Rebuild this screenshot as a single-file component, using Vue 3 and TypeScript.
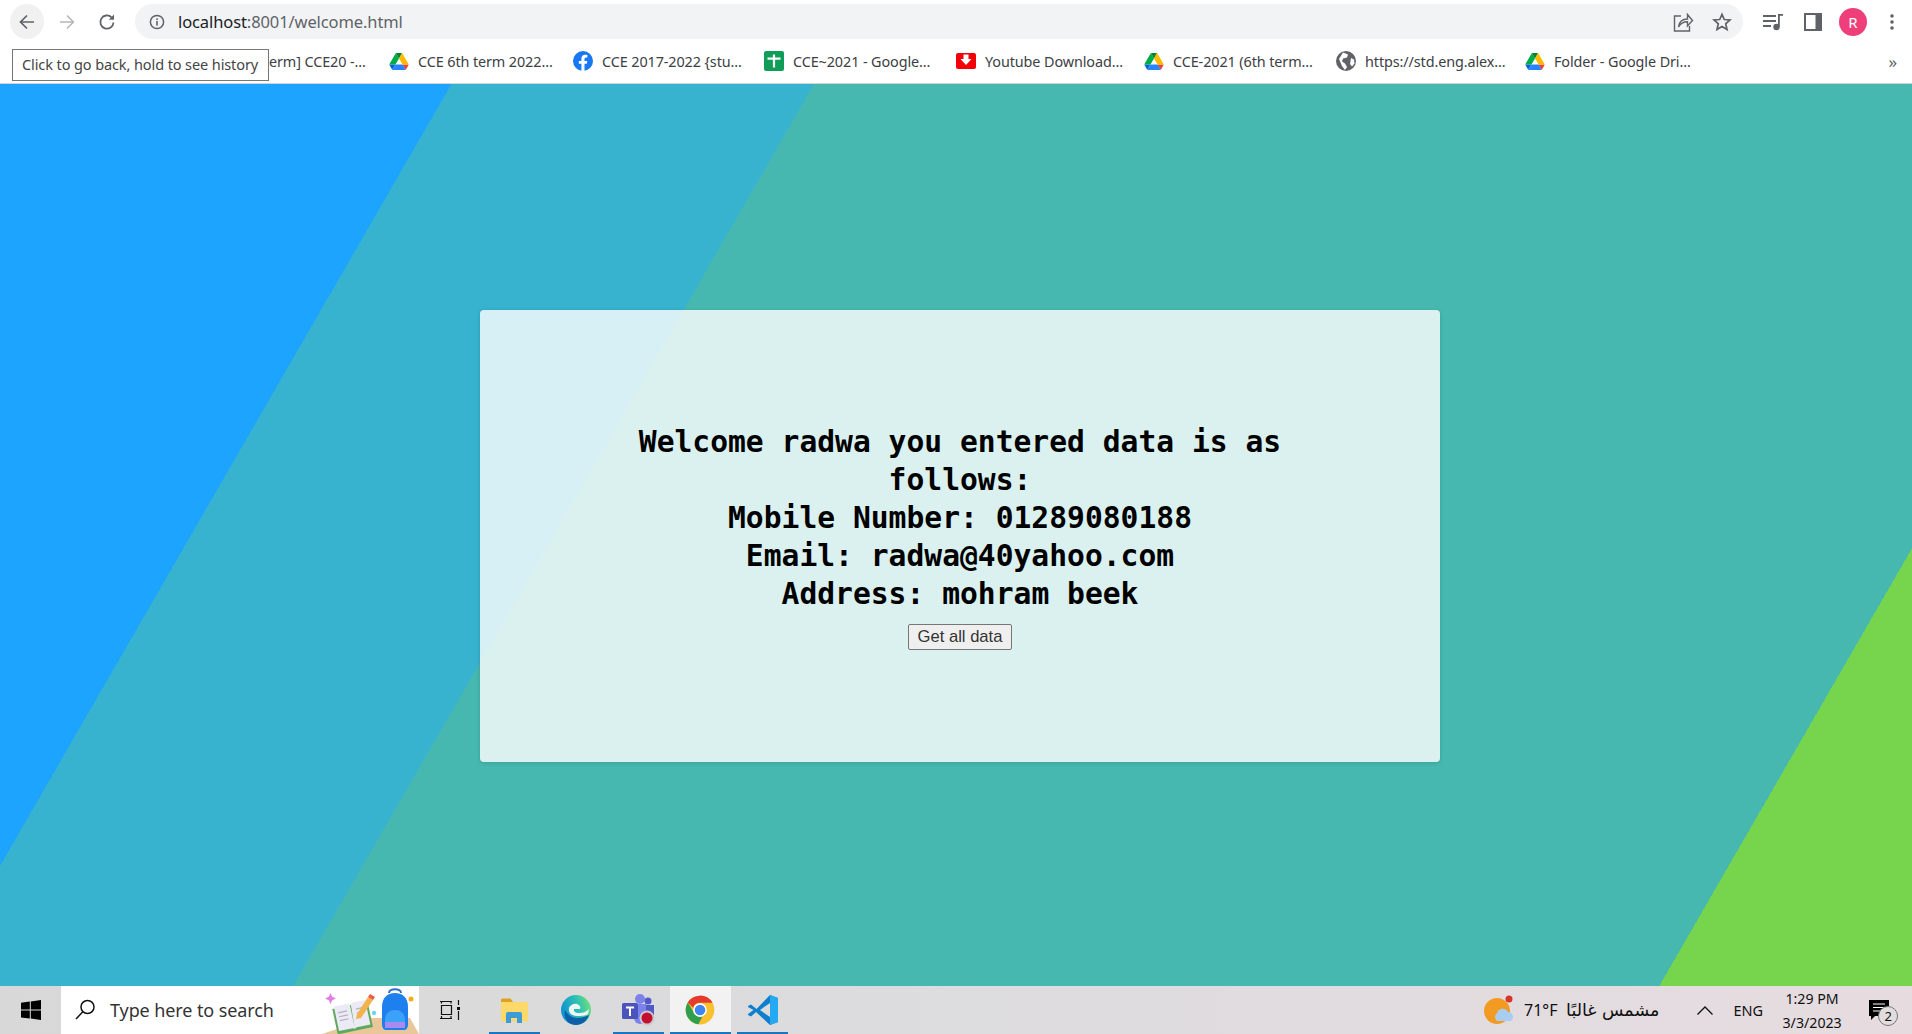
<script setup lang="ts">
// Bookmarks bar data, first one sits mostly under the tooltip
type Bookmark = { icon: string; label: string; pitch: number }

const bookmarks: Bookmark[] = [
  { icon: 'drive', label: 'CCE 6th term 2022...', pitch: 184 },
  { icon: 'facebook', label: 'CCE 2017-2022 {stu...', pitch: 191 },
  { icon: 'sheets', label: 'CCE~2021 - Google...', pitch: 192 },
  { icon: 'youtube', label: 'Youtube Download...', pitch: 188 },
  { icon: 'drive', label: 'CCE-2021 (6th term...', pitch: 192 },
  { icon: 'globe', label: 'https://std.eng.alex...', pitch: 189 },
  { icon: 'drive', label: 'Folder - Google Dri...', pitch: 170 },
]

const user = {
  name: 'radwa',
  mobile: '01289080188',
  email: 'radwa@40yahoo.com',
  address: 'mohram beek',
}
</script>

<template>
  <div class="screen">
    <header class="browser">
      <div class="toolbar">
        <div class="nav-btn nav-btn-active">
          <svg width="18" height="18" viewBox="0 0 18 18" fill="none" stroke="#5f6368" stroke-width="1.7">
            <path d="M16 9H3M9 2.500 2.500 9 9 15.500" />
          </svg>
        </div>
        <div class="nav-btn">
          <svg width="18" height="18" viewBox="0 0 18 18" fill="none" stroke="#b4b6b9" stroke-width="1.5">
            <path d="M2 9h13M9 2.500 15.500 9 9 15.500" />
          </svg>
        </div>
        <div class="nav-btn">
          <svg width="18" height="18" viewBox="0 0 18 18" fill="none" stroke="#5f6368" stroke-width="1.8">
            <path d="M15.500 9.500A6.600 6.600 0 1 1 13.600 4.400" />
            <path d="M16 1.600v5.200h-5.200z" fill="#5f6368" stroke="none" />
          </svg>
        </div>
        <div class="omnibox">
          <svg class="info-icon" width="16" height="16" viewBox="0 0 16 16" fill="none">
            <circle cx="8" cy="8" r="6.600" stroke="#5f6368" stroke-width="1.5" />
            <rect x="7.200" y="7" width="1.600" height="4.600" fill="#5f6368" />
            <rect x="7.200" y="4.400" width="1.600" height="1.600" fill="#5f6368" />
          </svg>
          <span class="url"><span class="host">localhost</span>:8001/welcome.html</span>
          <svg class="share-icon" width="22" height="22" viewBox="0 0 22 22" fill="none" stroke="#5f6368" stroke-width="1.4">
            <path d="M9 5H2.500v15h15v-5" />
            <path d="M6.500 16c.6-5 4-8 9-8V3.500l5 6-5 5.500v-4.300c-4 0-7 1.500-9 5.300z" />
          </svg>
          <svg class="star-icon" width="20" height="20" viewBox="0 0 20 20" fill="none" stroke="#5f6368" stroke-width="1.7">
            <path d="M10 2.300l2.300 5.200 5.700.5-4.300 3.800 1.300 5.600-5-3-5 3 1.300-5.600L2 8l5.700-.5z" />
          </svg>
        </div>
        <div class="toolbar-icons">
          <svg width="20" height="18" viewBox="0 0 20 18" fill="#5f6368">
            <rect x="0" y="2" width="13" height="2" />
            <rect x="0" y="7" width="13" height="2" />
            <rect x="0" y="12" width="8" height="2" />
            <rect x="16" y="1" width="4" height="1.800" />
            <rect x="15" y="1" width="1.800" height="13" />
            <circle cx="13.500" cy="14" r="3.200" />
          </svg>
          <svg class="side-panel" width="18" height="18" viewBox="0 0 18 18" fill="none">
            <rect x="1" y="1" width="16" height="16" fill="#fff" stroke="#5f6368" stroke-width="2" />
            <rect x="11.500" y="1" width="5.500" height="16" fill="#5f6368" />
          </svg>
          <div class="avatar">R</div>
          <svg class="menu-dots" width="6" height="18" viewBox="0 0 6 18" fill="#5f6368">
            <circle cx="3" cy="3" r="1.800" />
            <circle cx="3" cy="9" r="1.800" />
            <circle cx="3" cy="15" r="1.800" />
          </svg>
        </div>
      </div>
      <div class="bookmarks">
        <span class="first-bookmark">erm] CCE20 -...</span>
        <div v-for="(b, i) in bookmarks" :key="i" class="bookmark" :style="{ width: b.pitch + 'px' }">
          <svg v-if="b.icon === 'drive'" width="20" height="17" viewBox="0 0 87.300 78">
            <path d="m6.600 66.850 3.850 6.650c.8 1.400 1.950 2.500 3.300 3.300l13.750-23.800h-27.500c0 1.550.4 3.100 1.200 4.500z" fill="#0066da" />
            <path d="m43.650 25-13.750-23.800c-1.350.8-2.500 1.900-3.300 3.300l-25.400 44a9.060 9.060 0 0 0 -1.200 4.500h27.500z" fill="#00ac47" />
            <path d="m73.550 76.800c1.350-.8 2.500-1.900 3.300-3.300l1.600-2.750 7.650-13.250c.8-1.400 1.200-2.950 1.200-4.500h-27.502l5.852 11.500z" fill="#ea4335" />
            <path d="m43.650 25 13.750-23.800c-1.350-.8-2.900-1.200-4.500-1.200h-18.500c-1.600 0-3.150.45-4.500 1.200z" fill="#00832d" />
            <path d="m59.800 53h-32.300l-13.750 23.800c1.350.8 2.900 1.200 4.500 1.200h50.800c1.600 0 3.150-.45 4.500-1.200z" fill="#2684fc" />
            <path d="m73.400 26.500-12.700-22c-.8-1.400-1.950-2.500-3.300-3.300l-13.750 23.800 16.150 28h27.450c0-1.550-.4-3.100-1.200-4.500z" fill="#ffba00" />
          </svg>
          <svg v-else-if="b.icon === 'facebook'" width="20" height="20" viewBox="0 0 20 20">
            <circle cx="10" cy="10" r="10" fill="#1877f2" />
            <path d="M13.800 12.800l.5-2.900h-2.800V8c0-.8.4-1.600 1.600-1.600h1.300V4c0 0-1.100-.2-2.200-.2-2.300 0-3.800 1.400-3.800 3.900v2.200H5.800v2.900h2.600V20h3.100v-7.200z" fill="#fff" />
          </svg>
          <svg v-else-if="b.icon === 'sheets'" width="20" height="20" viewBox="0 0 20 20">
            <rect width="20" height="20" rx="2" fill="#0f9d58" />
            <rect x="3.500" y="6.500" width="13" height="2.200" fill="#fff" />
            <rect x="8.900" y="3.500" width="2.200" height="13" fill="#fff" />
          </svg>
          <svg v-else-if="b.icon === 'youtube'" width="20" height="16" viewBox="0 0 20 16">
            <rect width="20" height="16" rx="2" fill="#f40009" />
            <path d="M7.500 1.500h5v4.500h3L10 12 4.500 6h3z" fill="#fff" />
          </svg>
          <svg v-else width="20" height="20" viewBox="0 0 20 20">
            <circle cx="10" cy="10" r="10" fill="#5f6368" />
            <path d="M7 1.500l5 2-1 3-4 1-1 3 3 2 2 3.500-2 3L6 15 3 8zM15 7l3 1.500.5 4-2.500 3-2-2.500z" fill="#fff" />
          </svg>
          <span class="bookmark-label">{{ b.label }}</span>
        </div>
        <span class="more">»</span>
      </div>
      <div class="tooltip">Click to go back, hold to see history</div>
    </header>

    <main class="page">
      <section class="card">
        <div class="details">
          <div>Welcome {{ user.name }} you entered data is as follows:</div>
          <div>Mobile Number: {{ user.mobile }}</div>
          <div>Email: {{ user.email }}</div>
          <div>Address: {{ user.address }}</div>
        </div>
        <button class="get-all" type="button">Get all data</button>
      </section>
    </main>

    <footer class="taskbar">
      <div class="start">
        <svg width="20" height="20" viewBox="0 0 20 20" fill="#000">
          <path d="M0 2.800 8.800 1.600v8H0zM9.800 1.400 20 0v9.600H9.800zM0 10.600h8.800v8L0 17.400zM9.800 10.600H20V20L9.800 18.600z" />
        </svg>
      </div>
      <div class="search">
        <svg width="20" height="22" viewBox="0 0 20 22" fill="none" stroke="#111" stroke-width="1.500">
          <circle cx="12.500" cy="8" r="6.500" />
          <path d="M7.800 12.800 1 20" />
        </svg>
        <span class="search-text">Type here to search</span>
        <svg class="search-art" width="100" height="47" viewBox="0 0 100 47">
          <path d="M3 47 51 31h40l9 16z" fill="#e9c79b" />
          <path d="M11.500 6l1.600 3.800 3.900 1.700-3.900 1.700-1.600 3.800-1.600-3.800L6 11.500l3.900-1.700z" fill="#e57ae8" />
          <g transform="translate(-9 3) rotate(-12 42 25)">
            <rect x="24" y="15" width="36" height="26" fill="#5fa85c" />
            <path d="M26 13h15l1 2v24l-2-1H26zM43 15l1-2h14v25H44l-2 1z" fill="#eceaf6" />
            <path d="M29 20h9M29 24h9M29 28h9M47 20h8M47 24h8" stroke="#b4b2c2" stroke-width="1.200" />
          </g>
          <path d="M38 27 49 10l5 3-12 18-5 1z" fill="#f3b34c" />
          <path d="M49 10l2-3 5 3-2 3z" fill="#ec5a4a" />
          <circle cx="55" cy="26" r="2.200" fill="#6ed6ee" />
          <path d="M63 38V20c0-9 5-14 13-14s13 5 13 14v18c0 3-2 5-4 5H67c-2 0-4-2-4-5z" fill="#1e80ee" />
          <path d="M70 6c0-5 12-5 12 0" fill="none" stroke="#2a6fc9" stroke-width="2" />
          <path d="M66 41V33c0-6 4-10 10-10s10 4 10 10v8z" fill="#3aa2f8" />
          <path d="M66 35h20v6H66z" fill="#a98af0" />
          <circle cx="92" cy="12" r="2.500" fill="#f7ac16" />
        </svg>
      </div>
      <div class="task-item task-view">
        <svg width="20" height="20" viewBox="0 0 20 20" fill="none" stroke="#111" stroke-width="1.200">
          <path d="M0 1.500h12M0 18.500h12M1.500 5.500h10v9h-10zM1.500 1.500v2M11 1.500v2M1.500 16v2.500M11 16v2.500M18.500 0v5M18.500 11v9" />
          <rect x="17" y="7" width="3" height="3" fill="#111" stroke="none" />
        </svg>
      </div>
      <div class="task-item open explorer-item">
        <svg width="28" height="25" viewBox="0 0 28 25">
          <path d="M1 2a1.500 1.500 0 0 1 1.500-1.500h8L13 4H1z" fill="#dfa120" />
          <path d="M1 4h27v18a1.500 1.500 0 0 1-1.500 1.500H2.500A1.500 1.500 0 0 1 1 22z" fill="#fcd96a" />
          <path d="M6 16a2 2 0 0 1 2-2h12a2 2 0 0 1 2 2v9h-5v-5h-6v5H6z" fill="#3d9bd8" />
        </svg>
      </div>
      <div class="task-item edge-item">
        <svg width="30" height="30" viewBox="0 0 30 30">
          <defs>
            <linearGradient id="edgeTop" x1="0" y1="0.600" x2="1" y2="0.300">
              <stop offset="0" stop-color="#0c8fd8" />
              <stop offset="0.600" stop-color="#2fc2b0" />
              <stop offset="1" stop-color="#6fe07a" />
            </linearGradient>
          </defs>
          <circle cx="15" cy="15" r="15" fill="url(#edgeTop)" />
          <path d="M15 30C7 30 2 23 4 15c2 4 6 8 12 8 4 0 8-1 12-3-2 6-7 10-13 10z" fill="#0f5fa8" />
          <path d="M17 22c-6 0-9-4-8-8 1-3 5-5 8-4 3 1 4 3 3 5h-6c-.5 3 2 4 5 4 4 0 7-1 10-4l-1 5c-3 2-7 2-11 2z" fill="#f0f4f5" transform="translate(-1 -1)" />
        </svg>
      </div>
      <div class="task-item open teams-item">
        <svg width="33" height="32" viewBox="0 0 33 32">
          <circle cx="18" cy="5" r="5" fill="#7b83eb" />
          <circle cx="26" cy="7" r="3.500" fill="#5059c9" />
          <path d="M12 10h12v14a6 6 0 0 1-12 0z" fill="#7b83eb" />
          <path d="M24 11h8v9a4 4 0 0 1-8 0z" fill="#5059c9" />
          <rect x="0" y="9" width="16" height="16" rx="1.500" fill="#4b53bc" />
          <path d="M4 12.500h8v2H9v7.500H7v-7.500H4z" fill="#fff" />
          <circle cx="25" cy="24" r="7.500" fill="#c9c9cc" />
          <circle cx="25" cy="24" r="5.500" fill="#c50f2e" />
        </svg>
      </div>
      <div class="task-item open active chrome-item">
        <svg width="30" height="30" viewBox="0 0 48 48">
          <circle cx="24" cy="24" r="23" fill="#fbc02d" />
          <path d="M24 1a23 23 0 0 1 20 11.500H24a11.500 11.500 0 0 0-11 8L4.500 11.800A23 23 0 0 1 24 1z" fill="#e53a2e" />
          <path d="M4.500 11.800 14 28a11.500 11.500 0 0 0 13.500 7L21.500 46.800A23 23 0 0 1 4.500 11.800z" fill="#2e9e4f" />
          <circle cx="24" cy="24" r="11" fill="#fff" />
          <circle cx="24" cy="24" r="8.500" fill="#3f85f2" />
        </svg>
      </div>
      <div class="task-item open vscode-item">
        <svg width="30" height="30" viewBox="0 0 30 30">
          <path d="M22 0 8.500 14 3 9.500 0 11v1l5.500 3L0 19v1l3 1.500L8 17l14 13 8-3V3z" fill="#0d7fcb" />
          <path d="M22 0l8 3v24l-8 3z" fill="#24a9f2" />
          <path d="M22 8v14L12 15z" fill="#dcdcde" />
        </svg>
      </div>

      <div class="tray">
        <svg class="weather" width="30" height="32" viewBox="0 0 30 32">
          <circle cx="13" cy="17" r="13" fill="#f39a22" />
          <circle cx="25" cy="5" r="3.500" fill="#d7342c" />
          <path d="M13 27a5 5 0 0 1 0-8 6 6 0 0 1 11-1 5 5 0 0 1 3 9z" fill="#a9cdf0" />
        </svg>
        <span class="temp">71°F</span>
        <span class="forecast" dir="rtl">مشمس غالبًا</span>
        <svg class="chevron" width="16" height="9" viewBox="0 0 16 9" fill="none" stroke="#111" stroke-width="1.300">
          <path d="M.5 8.500 8 1l7.500 7.500" />
        </svg>
        <span class="lang">ENG</span>
        <div class="clock">
          <span>1:29 PM</span>
          <span>3/3/2023</span>
        </div>
        <div class="notify">
          <svg width="20" height="21" viewBox="0 0 20 21">
            <path d="M0 0h20v16H6l-4 4v-4H0z" fill="#000" />
            <path d="M4 4h12M4 7.500h12M4 11h9" stroke="#fff" stroke-width="1.200" />
          </svg>
          <span class="badge">2</span>
        </div>
      </div>
    </footer>
  </div>
</template>

<style>
body {
  margin: 0;
  overflow: hidden;
}
</style>

<style scoped>
.screen {
  width: 1912px;
  height: 1034px;
  display: flex;
  flex-direction: column;
  overflow: hidden;
  font-family: "Noto Sans", "Open Sans", sans-serif;
  color: #3c4043;
}

.browser {
  position: relative;
  height: 84px;
  flex: none;
  background: #fff;
  box-sizing: border-box;
  border-bottom: 1px solid #d2d3d5;
}

.toolbar {
  height: 43px;
  box-sizing: border-box;
  padding: 4px 0 0 10px;
  display: flex;
  align-items: flex-start;
}

.nav-btn {
  width: 34px;
  height: 35px;
  margin-right: 6px;
  display: flex;
  align-items: center;
  justify-content: center;
  border-radius: 50%;
}

.nav-btn-active {
  background: #f1f1f2;
}

.omnibox {
  flex: none;
  width: 1608px;
  height: 35px;
  margin-left: 5px;
  box-sizing: border-box;
  padding: 0 11px 0 14px;
  display: flex;
  align-items: center;
  background: #f1f3f4;
  border-radius: 18px;
}

.info-icon {
  margin-right: 13px;
}

.url {
  flex: 1;
  font-size: 16.500px;
  letter-spacing: -0.1px;
  color: #5f6368;
}

.host {
  color: #202124;
}

.share-icon {
  margin-right: 18px;
}

.toolbar-icons {
  display: flex;
  align-items: center;
  height: 35px;
  margin-left: 20px;
}

.toolbar-icons svg {
  margin-right: 21px;
}

.toolbar-icons .side-panel {
  margin-right: 17px;
}

.toolbar-icons .menu-dots {
  margin-right: 0;
}

.avatar {
  width: 28px;
  height: 28px;
  margin-right: 22px;
  border-radius: 50%;
  background: #ee3f7a;
  color: #fff;
  font-size: 15px;
  line-height: 28px;
  text-align: center;
}

.bookmarks {
  height: 36px;
  box-sizing: border-box;
  display: flex;
  align-items: center;
  padding: 0 15px 0 269px;
  font-size: 14.400px;
  letter-spacing: -0.1px;
}

.first-bookmark {
  width: 120px;
  white-space: nowrap;
}

.bookmark {
  display: flex;
  align-items: center;
  flex: none;
}

.bookmark svg {
  flex: none;
  margin-right: 9px;
}

.bookmark-label {
  display: block;
  white-space: nowrap;
}

.more {
  margin-left: auto;
  font-size: 17px;
  color: #5f6368;
}

.tooltip {
  position: absolute;
  left: 12px;
  top: 49px;
  width: 257px;
  height: 32px;
  box-sizing: border-box;
  border: 1px solid #767676;
  background: #fff;
  color: #444;
  font-size: 14.500px;
  line-height: 28px;
  padding-left: 9px;
  letter-spacing: -0.1px;
  white-space: nowrap;
}

/* hard colour stops, the diagonal bands of the page background */
.page {
  flex: 1;
  display: flex;
  align-items: center;
  justify-content: center;
  padding: 2px 0 0 8px;
  background: linear-gradient(
    120deg,
    #1ca4ff 391px,
    #37b2cf 391px,
    #37b2cf 705px,
    #46b8b0 705px,
    #46b8b0 1888px,
    #76d44d 1888px
  );
}

.card {
  width: 960px;
  height: 452px;
  display: flex;
  flex-direction: column;
  align-items: center;
  justify-content: center;
  background: rgba(255, 255, 255, 0.8);
  border-radius: 4px;
  box-shadow: 0 1px 4px rgba(0, 0, 0, 0.15);
}

.details {
  width: 680px;
  font-family: "DejaVu Sans Mono", "Liberation Mono", monospace;
  font-size: 29.650px;
  font-weight: 700;
  line-height: 38px;
  text-align: center;
  color: #000;
}

.get-all {
  margin-top: 11px;
  width: 104px;
  height: 26px;
  padding: 0;
  font-family: "Liberation Sans", Arial, sans-serif;
  font-size: 16.600px;
  color: #333;
  background: #efefef;
  border: 1px solid #767676;
  border-radius: 2px;
}

.taskbar {
  height: 48px;
  flex: none;
  display: flex;
  align-items: stretch;
  background: linear-gradient(90deg, #d8d8d8, #dcdcde 45%, #e6dce0);
  color: #111;
}

.start {
  width: 61px;
  display: flex;
  align-items: center;
  justify-content: center;
}

.search {
  width: 358px;
  background: #fff;
  display: flex;
  align-items: center;
  padding-left: 14px;
  box-sizing: border-box;
  overflow: hidden;
}

.search-text {
  margin-left: 15px;
  font-size: 18px;
  letter-spacing: -0.1px;
  color: #333;
  flex: 1;
  white-space: nowrap;
}

.search-art {
  flex: none;
  align-self: flex-end;
}

.task-item {
  display: flex;
  align-items: center;
  justify-content: center;
  box-sizing: border-box;
  flex: none;
}

.task-item.open {
  box-shadow: inset 0 -2px 0 #1976c0;
}

.task-item.active {
  background: #f2f2f3;
}

.task-view {
  width: 70px;
  padding-right: 8px;
}

.explorer-item {
  width: 51px;
  padding-right: 2px;
}

.edge-item {
  width: 73px;
  padding-right: 2px;
}

.teams-item {
  width: 51px;
  margin-right: 6px;
}

.chrome-item {
  width: 61px;
  margin-right: 6px;
  padding-right: 2px;
}

.vscode-item {
  width: 51px;
}

.tray {
  flex: 1;
  display: flex;
  align-items: center;
  padding-left: 696px;
  font-size: 15px;
}

.weather {
  flex: none;
}

.temp {
  margin-left: 10px;
  font-size: 16px;
  white-space: nowrap;
}

.forecast {
  margin-left: 11px;
  width: 91px;
  font-family: "DejaVu Sans", sans-serif;
  font-size: 17.500px;
  white-space: nowrap;
  flex: none;
}

.chevron {
  margin-left: 38px;
  flex: none;
}

.lang {
  margin-left: 20px;
  font-size: 14.500px;
}

.clock {
  margin-left: 11px;
  width: 76px;
  display: flex;
  flex-direction: column;
  align-items: center;
  gap: 7px;
  font-size: 14.200px;
  line-height: 17px;
  white-space: nowrap;
}

.notify {
  position: relative;
  margin-left: 19px;
  display: flex;
}

.badge {
  position: absolute;
  left: 9px;
  top: 6px;
  width: 20px;
  height: 20px;
  box-sizing: border-box;
  border: 1px solid #777;
  border-radius: 50%;
  background: #e2dcdf;
  font-size: 13px;
  line-height: 18px;
  text-align: center;
}
</style>
